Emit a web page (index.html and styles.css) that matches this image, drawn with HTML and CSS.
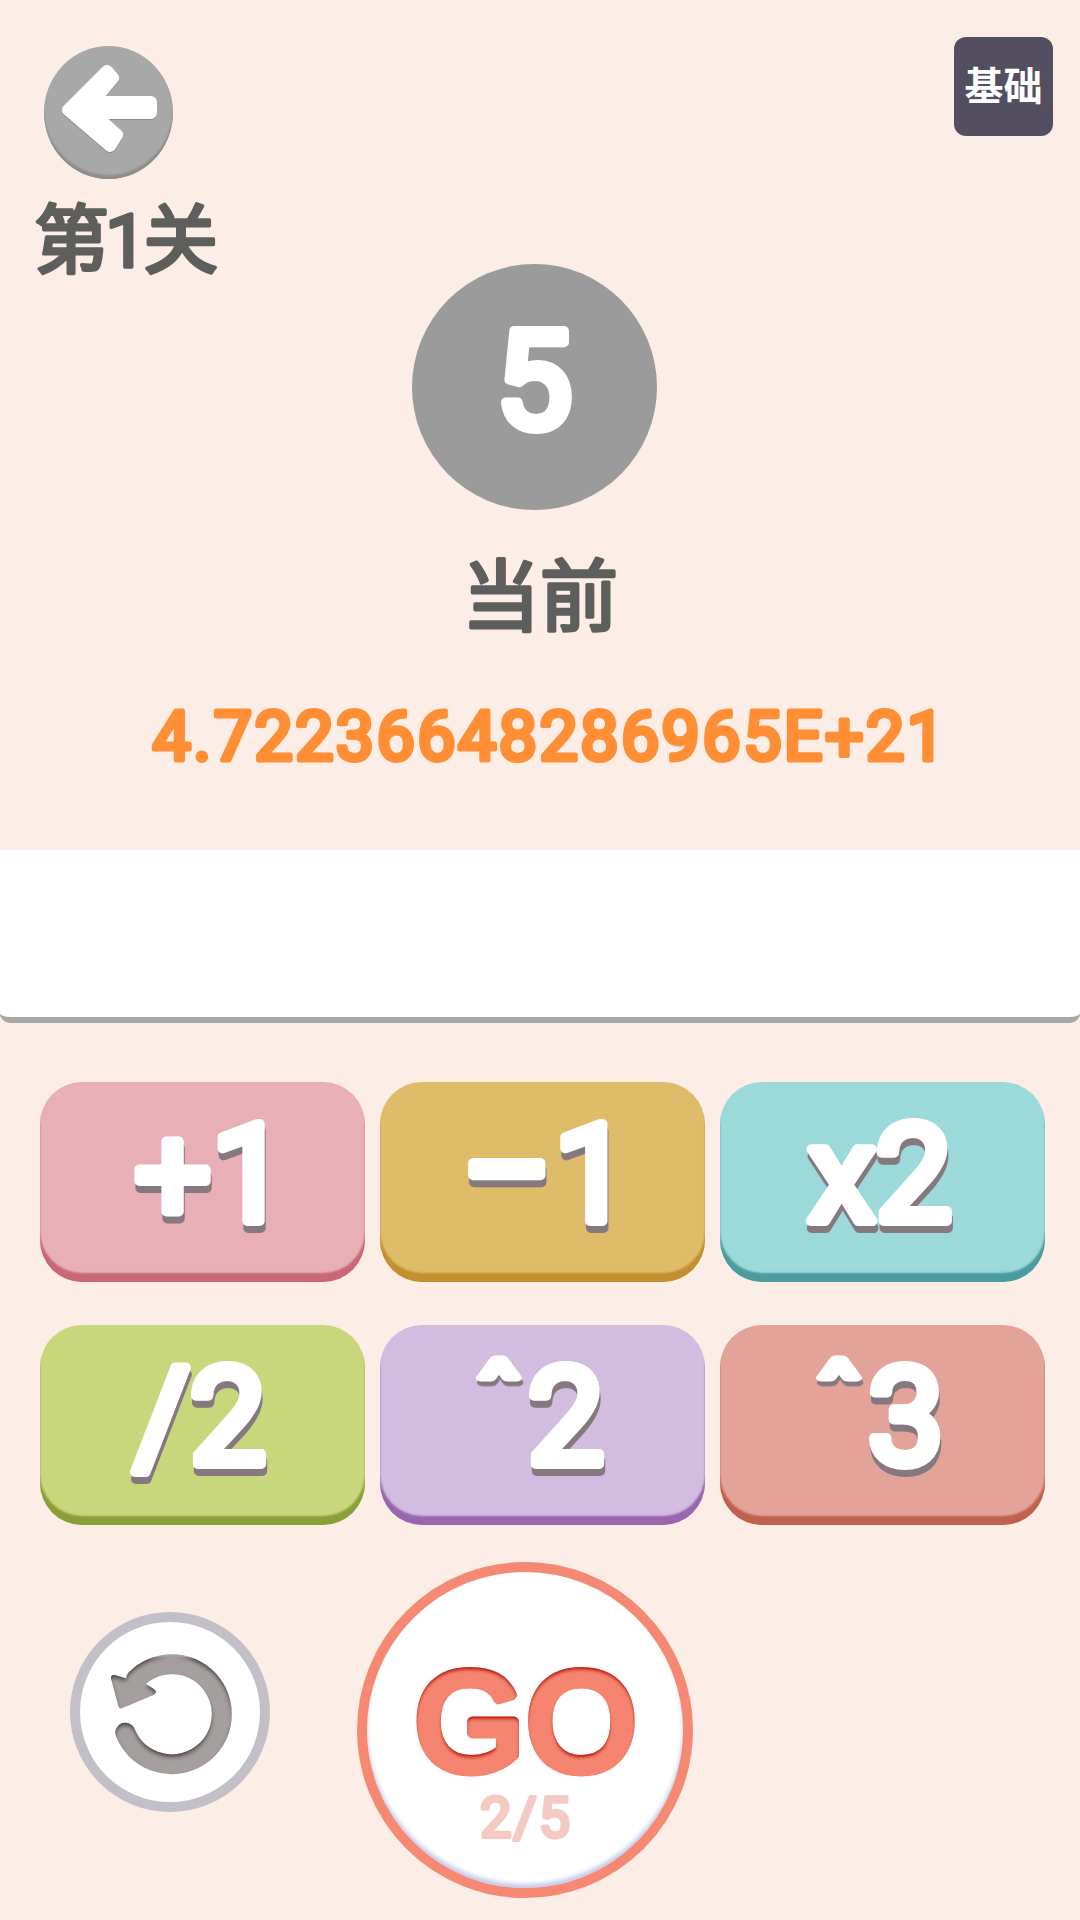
FILE: index.html
```html
<!DOCTYPE html>
<html lang="zh">
<head>
<meta charset="utf-8">
<title>第1关</title>
<link rel="stylesheet" href="styles.css">
</head>
<body>
<svg class="defs" width="0" height="0" aria-hidden="true">
  <defs>
    <filter id="inset-grey" x="-10%" y="-10%" width="120%" height="120%">
      <feComponentTransfer in="SourceAlpha" result="inv"><feFuncA type="table" tableValues="1 0"/></feComponentTransfer>
      <feGaussianBlur in="inv" stdDeviation="7" result="blur"/>
      <feOffset in="blur" dy="8" result="off"/>
      <feFlood flood-color="#3f3838"/>
      <feComposite in2="off" operator="in" result="shade"/>
      <feComposite in="shade" in2="SourceAlpha" operator="in" result="clip"/>
      <feMerge><feMergeNode in="SourceGraphic"/><feMergeNode in="clip"/></feMerge>
    </filter>
    <filter id="inset-red" x="-10%" y="-10%" width="120%" height="120%">
      <feComponentTransfer in="SourceAlpha" result="inv"><feFuncA type="table" tableValues="1 0"/></feComponentTransfer>
      <feGaussianBlur in="inv" stdDeviation="1.4" result="blur"/>
      <feOffset in="blur" dy="3" result="off"/>
      <feFlood flood-color="#c41a05"/>
      <feComposite in2="off" operator="in" result="shade"/>
      <feComposite in="shade" in2="SourceAlpha" operator="in" result="clip"/>
      <feMerge><feMergeNode in="SourceGraphic"/><feMergeNode in="clip"/></feMerge>
    </filter>
  </defs>
</svg>
<main class="screen">
  <header class="top">
    <div class="top-left">
      <button class="back" type="button" aria-label="返回">
        <svg class="back-icon" viewBox="0 0 129 129">
          <path class="back-arrow" d="M24 62 L63 23 L69 30 L49 54 L107 54 L107 65 L49 65 L73 87 L66 98 Z"/>
        </svg>
      </button>
      <svg class="level" viewBox="0 0 210 100"><text x="8" y="89">第1关</text></svg>
    </div>
    <div class="mode">基础</div>
  </header>

  <section class="current">
    <div class="goal"><svg class="goal-digit" viewBox="0 0 245 245"><text x="122" y="164">5</text></svg></div>
    <svg class="current-label" viewBox="0 0 200 100"><text x="100" y="80">当前</text></svg>
    <svg class="current-value" viewBox="0 0 1080 90"><text x="550" y="70">4.72236648286965E+21</text></svg>
  </section>

  <div class="tray"></div>

  <section class="ops">
    <div class="op op-pink"><svg class="op-text" viewBox="0 0 325 200"><text x="171" y="139">+1</text></svg></div>
    <div class="op op-yellow"><svg class="op-text" viewBox="0 0 325 200"><text x="165" y="139"><tspan class="minus" dy="7">−</tspan><tspan dy="-7">1</tspan></text></svg></div>
    <div class="op op-teal"><svg class="op-text" viewBox="0 0 325 200"><text x="160" y="139">x2</text></svg></div>
    <div class="op op-green"><svg class="op-text" viewBox="0 0 325 200"><text x="160" y="139">/2</text></svg></div>
    <div class="op op-purple"><svg class="op-text" viewBox="0 0 325 200"><text class="caret" transform="translate(119 72) scale(1.2 .68)">^</text><text x="186" y="139">2</text></svg></div>
    <div class="op op-salmon"><svg class="op-text" viewBox="0 0 325 200"><text class="caret" transform="translate(119 72) scale(1.2 .68)">^</text><text x="186" y="139">3</text></svg></div>
  </section>

  <section class="actions">
    <button class="reset" type="button" aria-label="重置">
      <svg class="reset-icon" viewBox="90 96 540 540">
        <g class="reset-glyph">
          <path class="reset-ring" d="M226 428 A150 150 0 1 0 258 268"/>
          <path class="reset-head" d="M192 264 L226 274 L288 292 L308 306 L214 346 Z"/>
        </g>
      </svg>
    </button>
    <button class="go" type="button">
      <svg class="go-text" viewBox="0 0 316 316"><text class="go-word" x="160" y="198">GO</text><text class="go-count" x="159" y="265">2/5</text></svg>
    </button>
  </section>
</main>
</body>
</html>
```
FILE: styles.css
```css
* { box-sizing: border-box; }
html, body { margin: 0; padding: 0; }
body {
  width: 1080px;
  height: 1920px;
  background: #fceee6;
  overflow: hidden;
  font-family: Roboto, "Noto Sans CJK SC", sans-serif;
}
.defs { position: absolute; }
button { padding: 0; margin: 0; background: none; border: 0; display: block; }
svg { display: block; overflow: visible; }
svg text {
  font-family: Roboto, "Noto Sans CJK SC", sans-serif;
  stroke-linejoin: round;
  stroke-linecap: round;
  paint-order: stroke;
}

.screen { display: flex; flex-direction: column; width: 1080px; height: 1920px; }

.top {
  display: flex;
  justify-content: space-between;
  align-items: flex-start;
  height: 264px;
  padding: 37px 27px 0 26px;
}
.top-left { display: flex; flex-direction: column; padding-top: 9px; }
.back {
  width: 129px;
  height: 133px;
  margin-left: 18px;
  border-radius: 50%;
  background: #a8a8a8;
  box-shadow: inset 0 -4px 2px #908d8c;
}
.back-icon { width: 129px; height: 129px; }
.back-arrow {
  fill: #fff;
  stroke: #fff;
  stroke-width: 12;
  stroke-linejoin: round;
  filter: drop-shadow(0 1.5px 0 #8b8b8b);
}
.level { width: 210px; height: 100px; margin-top: -1px; }
.level text { font-size: 75px; letter-spacing: -4px; fill: #5e5e5c; stroke: #5e5e5c; stroke-width: 3.5px; }
.mode {
  display: flex;
  align-items: center;
  justify-content: center;
  width: 99px;
  height: 99px;
  padding-bottom: 7px;
  border-radius: 12px;
  background: #544f60;
  color: #fff;
  font-family: "Noto Sans CJK SC", sans-serif;
  font-weight: 700;
  font-size: 39px;
  line-height: 1;
}

.current { display: flex; flex-direction: column; align-items: center; }
.goal {
  width: 245px;
  height: 246px;
  margin-right: 11px;
  border-radius: 50%;
  background: #9b9b9b;
}
.goal-digit { width: 245px; height: 245px; }
.goal-digit text { font-size: 136px; text-anchor: middle; fill: #fff; stroke: #fff; stroke-width: 10px; }
.current-label { width: 200px; height: 100px; margin-top: 35px; }
.current-label text { font-size: 78px; text-anchor: middle; fill: #5e5e5c; stroke: #5e5e5c; stroke-width: 3.5px; }
.current-value { width: 1080px; height: 90px; margin-top: 45px; }
.current-value text { font-size: 68px; letter-spacing: 2.5px; text-anchor: middle; fill: #ff8e35; stroke: #ff8e35; stroke-width: 5px; }

.tray {
  height: 173px;
  margin-top: 70px;
  background: #fff;
  border-bottom: 6px solid #a8a8a6;
  border-radius: 0 0 10px 10px;
}

.ops {
  display: grid;
  grid-template-columns: repeat(3, 325px);
  grid-auto-rows: 200px;
  column-gap: 15px;
  row-gap: 43px;
  margin-top: 59px;
  padding-left: 40px;
}
.op { border-radius: 42px; }
.op-text { width: 325px; height: 200px; }
.op-text text {
  font-size: 136px;
  text-anchor: middle;
  fill: #fff;
  stroke: #fff;
  stroke-width: 10px;
  filter: drop-shadow(1px 7px 0 #85797f);
}
.op-text .minus { font-size: 165px; }
.op-text .caret {
  font-size: 80px;
  vector-effect: non-scaling-stroke;
  filter: drop-shadow(1px 7px 0 #85797f);
}
.op-pink { background: #e8b0b6; box-shadow: inset 0 -9px 2px #c96775; }
.op-yellow { background: #dfbc69; box-shadow: inset 0 -9px 2px #c28f31; }
.op-teal { background: #9bd9db; box-shadow: inset 0 -9px 2px #4c9b9d; }
.op-green { background: #c8d77c; box-shadow: inset 0 -9px 2px #8a9f38; }
.op-purple { background: #d2bcdf; box-shadow: inset 0 -9px 2px #9866ab; }
.op-salmon { background: #e3a398; box-shadow: inset 0 -9px 2px #c0604f; }

.actions { display: flex; align-items: flex-start; margin-top: 37px; padding-left: 70px; gap: 87px; }
.reset {
  width: 200px;
  height: 200px;
  margin-top: 50px;
  border: 10px solid #c3bfc7;
  border-radius: 50%;
  background: #fff;
}
.reset-icon { width: 180px; height: 180px; }
.reset-glyph { filter: url(#inset-grey); }
.reset-ring { fill: none; stroke: #a5a09f; stroke-width: 60; stroke-linecap: round; }
.reset-head { fill: #a5a09f; stroke: #a5a09f; stroke-width: 18; stroke-linejoin: round; }
.go {
  width: 336px;
  height: 336px;
  border: 10px solid #f58973;
  border-radius: 50%;
  background: #fff;
  box-shadow: inset 0 -4px 4px #c3cbef;
}
.go-text { width: 316px; height: 316px; }
.go-word {
  font-family: "Liberation Sans", sans-serif;
  font-size: 140px;
  text-anchor: middle;
  letter-spacing: 3px;
  fill: #f58470;
  stroke: #f58470;
  stroke-width: 11px;
  filter: url(#inset-red);
}
.go-count {
  font-size: 56px;
  font-weight: 400;
  letter-spacing: 2px;
  text-anchor: middle;
  fill: #f4cbc4;
  stroke: #f4cbc4;
  stroke-width: 4px;
}
```
